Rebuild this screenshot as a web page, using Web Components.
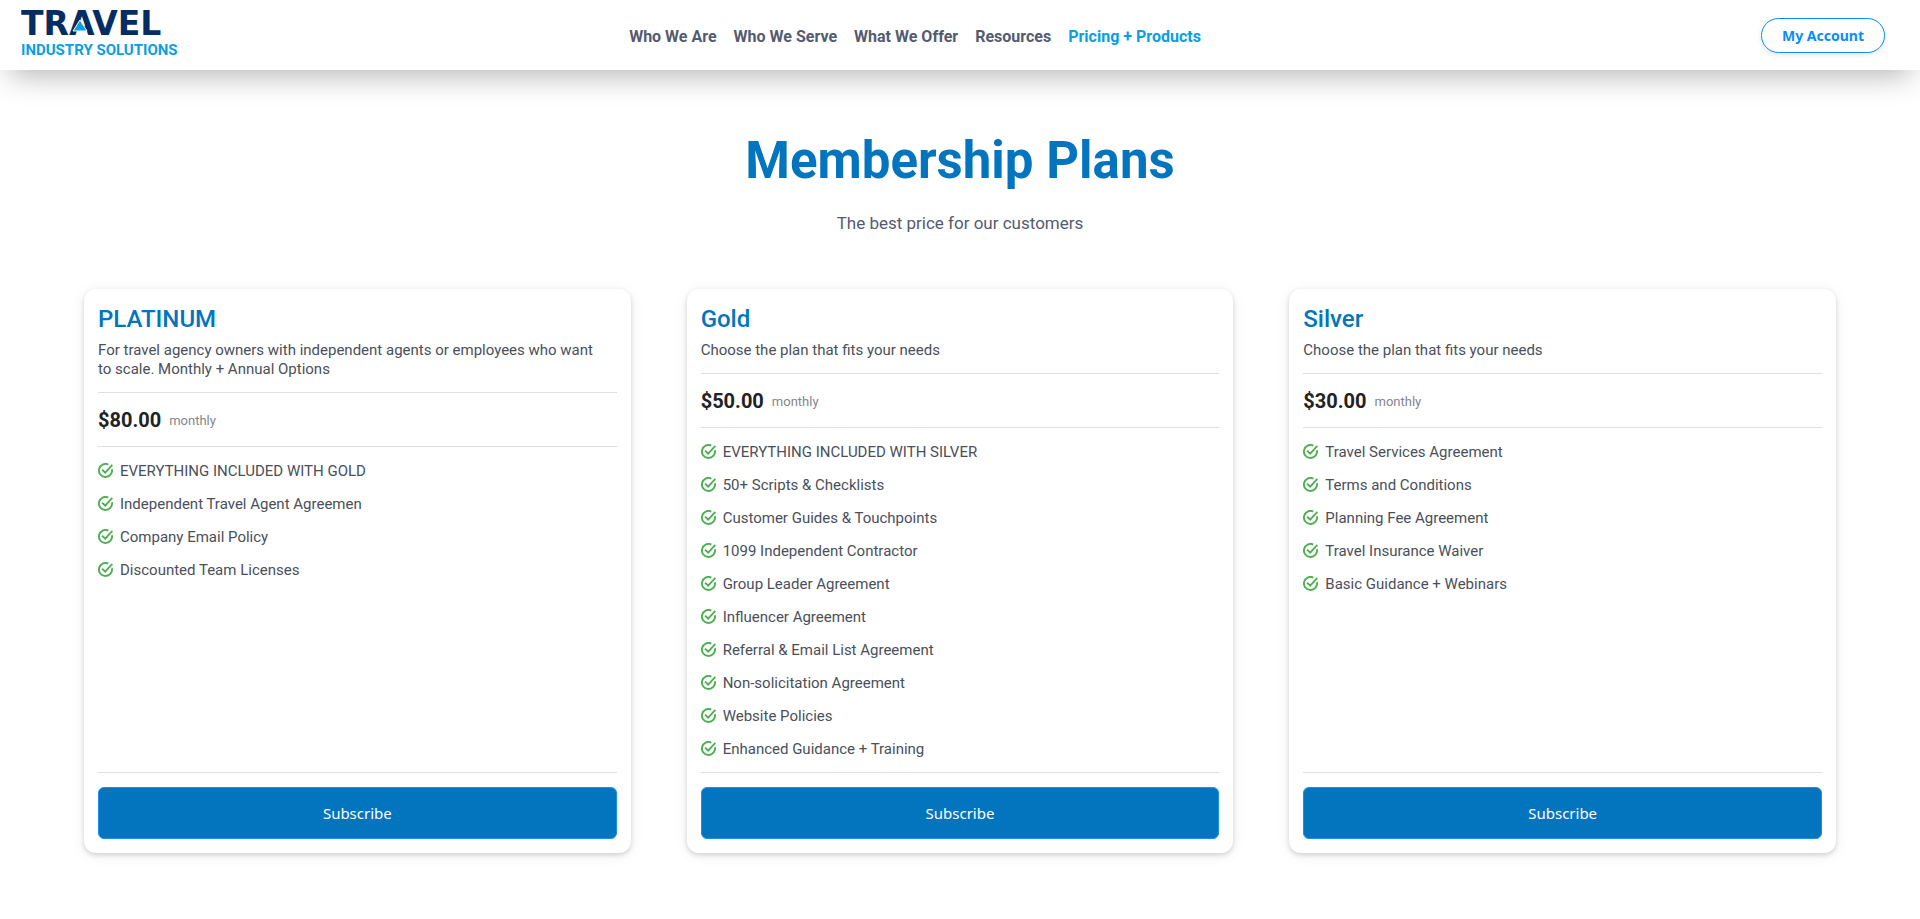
<!DOCTYPE html>
<html lang="en">
<head>
<meta charset="utf-8">
<meta name="viewport" content="width=device-width, initial-scale=1">
<title>Membership Plans | Travel Industry Solutions</title>
<style>
  body {
    margin: 0;
    background: #fff;
    color: #4a4f59;
    font-family: Roboto, "Liberation Sans", sans-serif;
    font-size: 15px;
    --brand: #0275be;
    --accent: #0a9fdf;
    --navy: #032d63;
    --slate: #545b6f;
    --rule: #dcdfe4;
    --success: #4caf50;
  }
</style>
</head>
<body>

<site-header>
  <site-logo slot="brand"></site-logo>
  <nav-item href="#about">Who We Are</nav-item>
  <nav-item href="#audience">Who We Serve</nav-item>
  <nav-item href="#offer">What We Offer</nav-item>
  <nav-item href="#resources">Resources</nav-item>
  <nav-item href="#pricing" current>Pricing + Products</nav-item>
  <account-button slot="action">My Account</account-button>
</site-header>

<plans-section>
  <span slot="title">Membership Plans</span>
  <span slot="subtitle">The best price for our customers</span>

  <plan-card>
    <span slot="name">PLATINUM</span>
    <span slot="description">For travel agency owners with independent agents or employees who want to scale. Monthly + Annual Options</span>
    <span slot="price">$80.00</span>
    <span slot="period">monthly</span>
    <plan-feature>EVERYTHING INCLUDED WITH GOLD</plan-feature>
    <plan-feature>Independent Travel Agent Agreemen</plan-feature>
    <plan-feature>Company Email Policy</plan-feature>
    <plan-feature>Discounted Team Licenses</plan-feature>
  </plan-card>

  <plan-card>
    <span slot="name">Gold</span>
    <span slot="description">Choose the plan that fits your needs</span>
    <span slot="price">$50.00</span>
    <span slot="period">monthly</span>
    <plan-feature>EVERYTHING INCLUDED WITH SILVER</plan-feature>
    <plan-feature>50+ Scripts &amp; Checklists</plan-feature>
    <plan-feature>Customer Guides &amp; Touchpoints</plan-feature>
    <plan-feature>1099 Independent Contractor</plan-feature>
    <plan-feature>Group Leader Agreement</plan-feature>
    <plan-feature>Influencer Agreement</plan-feature>
    <plan-feature>Referral &amp; Email List Agreement</plan-feature>
    <plan-feature>Non-solicitation Agreement</plan-feature>
    <plan-feature>Website Policies</plan-feature>
    <plan-feature>Enhanced Guidance + Training</plan-feature>
  </plan-card>

  <plan-card>
    <span slot="name">Silver</span>
    <span slot="description">Choose the plan that fits your needs</span>
    <span slot="price">$30.00</span>
    <span slot="period">monthly</span>
    <plan-feature>Travel Services Agreement</plan-feature>
    <plan-feature>Terms and Conditions</plan-feature>
    <plan-feature>Planning Fee Agreement</plan-feature>
    <plan-feature>Travel Insurance Waiver</plan-feature>
    <plan-feature>Basic Guidance + Webinars</plan-feature>
  </plan-card>
</plans-section>

<script>
  class BaseElement extends HTMLElement {
    constructor() {
      super();
      this.attachShadow({ mode: "open" }).innerHTML = this.constructor.markup;
    }
  }

  class SiteHeader extends BaseElement {
    static markup = `
      <style>
        :host { display: block; }
        header {
          display: grid;
          grid-template-columns: 1fr auto 1fr;
          align-items: center;
          height: 70px;
          box-sizing: border-box;
          padding: 0 35px 0 21px;
          background: #fff;
          box-shadow: 0 15px 30px -10px rgba(0, 0, 0, .3);
        }
        nav { display: flex; gap: 17px; padding: 4px 76px 0 0; }
        .action { justify-self: end; }
      </style>
      <header>
        <slot name="brand"></slot>
        <nav aria-label="Main"><slot></slot></nav>
        <div class="action"><slot name="action"></slot></div>
      </header>`;
  }

  class SiteLogo extends BaseElement {
    static markup = `
      <style>
        :host { display: block; }
        a, svg { display: block; }
        a { width: 160px; }
        .word { font: 700 33px "DejaVu Sans", sans-serif; fill: var(--navy); }
        .tag { font: 700 15px Roboto, sans-serif; fill: var(--accent); }
      </style>
      <a href="#home" aria-label="Travel Industry Solutions">
        <svg width="160" height="60" viewBox="0 -8 160 60">
          <text class="word" x="0" y="22">TRAVEL</text>
          <path d="M59 7l7 11H52z" fill="var(--accent)" stroke="#fff" stroke-width="1"/>
          <text class="tag" x="0" y="42">INDUSTRY SOLUTIONS</text>
        </svg>
      </a>`;
  }

  class NavItem extends BaseElement {
    static markup = `
      <style>
        :host { display: block; }
        a {
          display: block;
          color: var(--slate);
          font-size: 16px;
          font-weight: 700;
          line-height: 24px;
          text-decoration: none;
          white-space: nowrap;
        }
        :host([current]) a { color: var(--accent); }
      </style>
      <a><slot></slot></a>`;
    connectedCallback() {
      const link = this.shadowRoot.querySelector("a");
      link.href = this.getAttribute("href");
      if (this.hasAttribute("current")) link.setAttribute("aria-current", "page");
    }
  }

  class AccountButton extends BaseElement {
    static markup = `
      <style>
        :host { display: block; }
        button {
          display: block;
          height: 35px;
          padding: 0 20px;
          border: 1px solid #0a8cff;
          border-radius: 18px;
          background: #fff;
          color: #0a8cff;
          font: 700 14px "Noto Sans", sans-serif;
          box-shadow: 0 2px 5px rgba(0, 0, 0, .1);
          cursor: pointer;
        }
      </style>
      <button type="button"><slot></slot></button>`;
  }

  class PlansSection extends BaseElement {
    static markup = `
      <style>
        :host { display: block; }
        main { padding: 59px 84px; }
        h1, p { margin: 0; text-align: center; }
        h1 { color: var(--brand); font-size: 51px; font-weight: 700; line-height: 64px; }
        p { margin: 18px 0 54px; color: var(--slate); font-size: 17px; line-height: 24px; }
        .plans { display: grid; grid-template-columns: repeat(3, 1fr); gap: 56px; }
      </style>
      <main>
        <h1><slot name="title"></slot></h1>
        <p><slot name="subtitle"></slot></p>
        <div class="plans"><slot></slot></div>
      </main>`;
  }

  class PlanCard extends BaseElement {
    static markup = `
      <style>
        :host { display: grid; }
        article {
          display: flex;
          flex-direction: column;
          padding: 14px;
          border-radius: 12px;
          background: #fff;
          box-shadow: 0 2px 5px rgba(0, 0, 0, .16), 0 2px 16px rgba(0, 0, 0, .06);
        }
        h2 { margin: 0 0 6px; color: var(--brand); font-size: 24px; font-weight: 500; line-height: 32px; }
        .description { margin: 0; padding: 0 8px 13px 0; font-size: 15px; line-height: 19px; }
        .cost {
          display: flex;
          align-items: center;
          gap: 8px;
          padding: 14px 0 12px;
          border: solid var(--rule);
          border-width: 1px 0;
          line-height: 27px;
        }
        .price { color: #212224; font-size: 20px; font-weight: 700; }
        .period { color: #83868c; font-size: 13px; }
        .features { flex: 1; padding: 8px 0 6px; }
        button {
          height: 52px;
          border: 1px solid #1b8ff0;
          border-radius: 6px;
          background: var(--brand);
          color: #fff;
          font: 400 15px "Noto Sans", sans-serif;
          cursor: pointer;
        }
        footer { display: grid; padding-top: 14px; border-top: 1px solid var(--rule); }
      </style>
      <article>
        <h2><slot name="name"></slot></h2>
        <p class="description"><slot name="description"></slot></p>
        <div class="cost">
          <span class="price"><slot name="price"></slot></span>
          <span class="period"><slot name="period"></slot></span>
        </div>
        <div class="features" role="list"><slot></slot></div>
        <footer><button type="button">Subscribe</button></footer>
      </article>`;
  }

  class PlanFeature extends BaseElement {
    static markup = `
      <style>
        :host { display: flex; align-items: center; gap: 7px; line-height: 33px; }
        svg { flex: none; padding-bottom: 3px; }
      </style>
      <svg width="15" height="15" viewBox="0 0 24 24" fill="none" stroke="var(--success)" stroke-width="3" aria-hidden="true">
        <path d="M22.3 10A10.5 10.5 0 1 1 16.5 2.5"/>
        <path d="M6.5 10.5l5 5L23 3"/>
      </svg>
      <span><slot></slot></span>`;
    connectedCallback() {
      this.setAttribute("role", "listitem");
    }
  }

  customElements.define("site-header", SiteHeader);
  customElements.define("site-logo", SiteLogo);
  customElements.define("nav-item", NavItem);
  customElements.define("account-button", AccountButton);
  customElements.define("plans-section", PlansSection);
  customElements.define("plan-card", PlanCard);
  customElements.define("plan-feature", PlanFeature);
</script>
</body>
</html>
